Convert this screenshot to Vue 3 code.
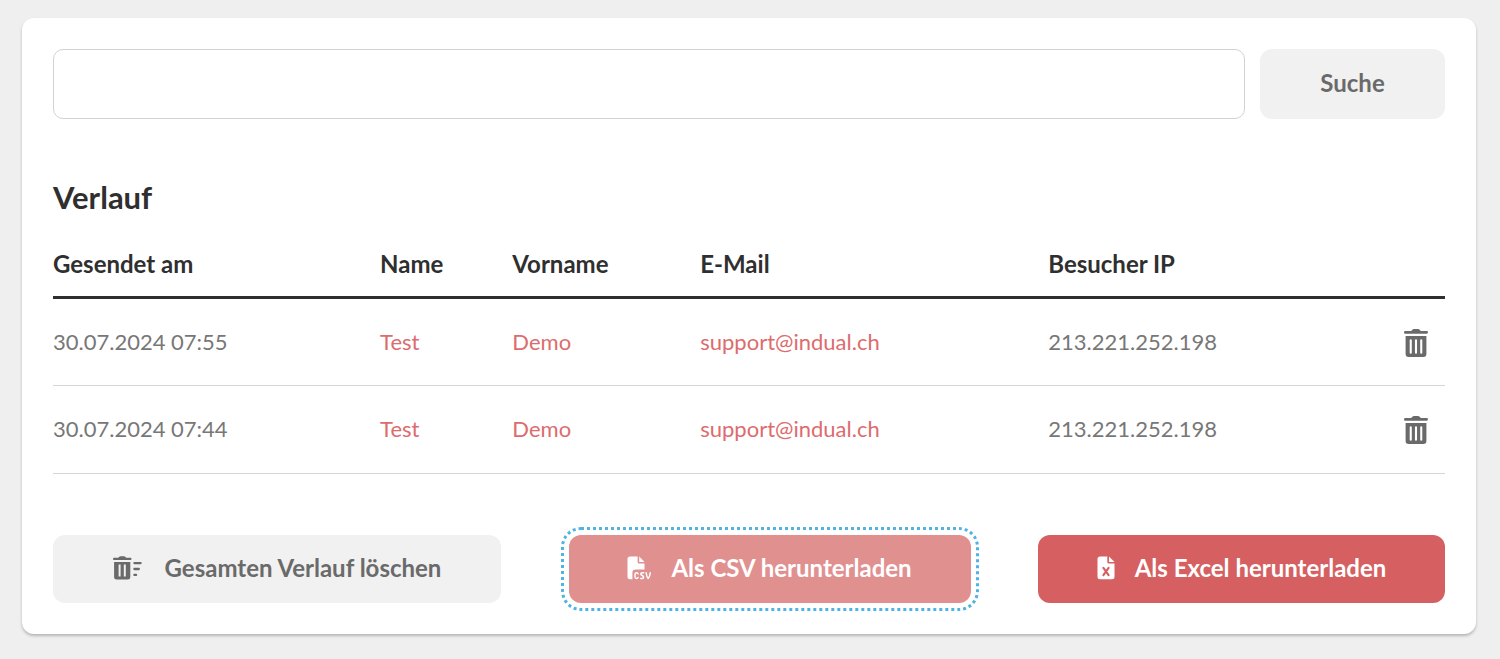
<script setup>
import { ref } from 'vue'

const query = ref('')
const rows = ref([
  { id: 1, sent: '30.07.2024 07:55', name: 'Test', first: 'Demo', mail: 'support@indual.ch', ip: '213.221.252.198' },
  { id: 2, sent: '30.07.2024 07:44', name: 'Test', first: 'Demo', mail: 'support@indual.ch', ip: '213.221.252.198' },
])

function remove(id) {
  rows.value = rows.value.filter((row) => row.id !== id)
}
</script>

<template>
  <main class="card">
    <form class="search" role="search" @submit.prevent>
      <input v-model="query" class="search-field" type="text" aria-label="Suche" />
      <button class="btn btn-grey btn-search" type="submit">Suche</button>
    </form>

    <h2 class="title">Verlauf</h2>

    <table class="history">
      <colgroup>
        <col class="col-sent" />
        <col class="col-name" />
        <col class="col-first" />
        <col class="col-mail" />
        <col />
        <col class="col-action" />
      </colgroup>
      <thead>
        <tr>
          <th scope="col">Gesendet am</th>
          <th scope="col">Name</th>
          <th scope="col">Vorname</th>
          <th scope="col">E-Mail</th>
          <th scope="col">Besucher IP</th>
          <td></td>
        </tr>
      </thead>
      <tbody>
        <tr v-for="row in rows" :key="row.id">
          <td>{{ row.sent }}</td>
          <td><a href="#">{{ row.name }}</a></td>
          <td><a href="#">{{ row.first }}</a></td>
          <td><a href="#">{{ row.mail }}</a></td>
          <td>{{ row.ip }}</td>
          <td class="action">
            <button class="icon-btn" type="button" aria-label="Eintrag löschen" @click="remove(row.id)">
              <svg class="trash" viewBox="0 0 24 28" aria-hidden="true">
                <path fill="currentColor" d="M1.2 2H7.2L8.6 .6Q9.1 0 9.9 0H14.1Q14.9 0 15.4 .6L16.8 2H22.8Q24 2 24 3.3T22.8 4.8H1.2Q0 4.8 0 3.4T1.2 2Z" />
                <path fill="currentColor" fill-rule="evenodd" d="M1.6 7H22.4V25Q22.4 28 19.4 28H4.6Q1.6 28 1.6 25ZM5.7 11.2V23.8Q5.7 24.8 6.75 24.8T7.8 23.8V11.2Q7.8 10.2 6.75 10.2T5.7 11.2ZM10.95 11.2V23.8Q10.95 24.8 12 24.8T13.05 23.8V11.2Q13.05 10.2 12 10.2T10.95 11.2ZM16.2 11.2V23.8Q16.2 24.8 17.25 24.8T18.3 23.8V11.2Q18.3 10.2 17.25 10.2T16.2 11.2Z" />
              </svg>
            </button>
          </td>
        </tr>
      </tbody>
    </table>

    <div class="actions">
      <button class="btn btn-grey btn-clear" type="button">
        <svg class="icon-clear" viewBox="0 0 29 24" aria-hidden="true">
          <path fill="currentColor" d="M.9 1.8H5.2L6.3 .7Q6.8 .2 7.5 .2H11Q11.7 .2 12.2 .7L13.3 1.8H17.6Q18.5 1.8 18.5 2.9T17.6 4H.9Q0 4 0 2.9T.9 1.8Z" />
          <path fill="currentColor" fill-rule="evenodd" d="M1.1 6H17.3V21.2Q17.3 23.6 14.9 23.6H3.5Q1.1 23.6 1.1 21.2ZM5.6 8.6V20.6H7.6V8.6ZM10.8 8.6V20.6H12.8V8.6Z" />
          <path fill="none" stroke="currentColor" stroke-width="2.3" stroke-linecap="round" d="M21.4 7.1H27.6M21.4 13H25.8M21.4 18.9H23.1" />
        </svg>
        <span>Gesamten Verlauf löschen</span>
      </button>
      <button class="btn btn-red btn-csv" type="button">
        <svg class="icon-csv" viewBox="0 0 24 24" aria-hidden="true">
          <path fill="currentColor" d="M3 .5H10.6V6Q10.6 7.5 12.1 7.5H17.5V13.6H8.5Q5.4 13.6 5.4 16.7V23.3H3Q.5 23.3 .5 20.8V3Q.5 .5 3 .5Z" />
          <path fill="currentColor" d="M12.2 .5L17.5 5.9H12.2Z" />
          <path fill="none" stroke="currentColor" stroke-width="1.5" stroke-linecap="round" stroke-linejoin="round" d="M11.1 17.9Q10.9 16.8 9.6 16.8Q8 16.8 8 18.5V20.8Q8 22.5 9.6 22.5Q10.9 22.5 11.1 21.4M16.7 16.8H15.2Q13.8 16.8 13.8 18.1Q13.8 19 15.2 19.5T16.6 21.2Q16.6 22.5 15.2 22.5H13.7M19.2 16.8Q19.3 20.2 21.2 22.5Q23.1 20.2 23.2 16.8" />
        </svg>
        <span>Als CSV herunterladen</span>
      </button>
      <button class="btn btn-red btn-excel" type="button">
        <svg class="icon-excel" viewBox="0 0 18 24" aria-hidden="true">
          <path fill="currentColor" d="M3 .5H10.3V6Q10.3 7.5 11.8 7.5H17.5V20.8Q17.5 23.3 15 23.3H3Q.5 23.3 .5 20.8V3Q.5 .5 3 .5Z" />
          <path fill="currentColor" d="M12 .5L17.5 5.9H12Z" />
          <path class="cut" fill="none" stroke-width="2.1" stroke-linecap="round" d="M6.4 11.9L11.6 19.2M11.6 11.9L6.4 19.2" />
        </svg>
        <span>Als Excel herunterladen</span>
      </button>
    </div>
  </main>
</template>

<style>
body {
  margin: 0;
  background: #efefef;
}
</style>

<style scoped>
.card {
  margin: 18px 24px 25px 22px;
  padding: 31px;
  border-radius: 12px;
  background: #fff;
  box-shadow: 0 2px 3px rgba(0, 0, 0, 0.24);
  color: #6a6a6a;
  font-family: Lato, "Open Sans", sans-serif;
  font-size: 22px;
  line-height: 28px;
}

.search {
  display: flex;
  gap: 15px;
}

.search-field {
  flex: 1;
  min-width: 0;
  height: 70px;
  box-sizing: border-box;
  padding: 0 20px;
  border: 1px solid #d2d2d2;
  border-radius: 10px;
  background: #fff;
  color: inherit;
  font: inherit;
}

.btn {
  display: flex;
  align-items: center;
  justify-content: center;
  height: 68px;
  box-sizing: border-box;
  padding: 0 0 2px;
  border: 0;
  border-radius: 12px;
  font: inherit;
  font-size: 24px;
  font-weight: 700;
  white-space: nowrap;
  cursor: pointer;
}

.btn-grey {
  background: #f1f1f1;
  color: #6a6a6a;
}

.btn-red {
  background: #d66061;
  color: #fff;
}

.btn-search {
  width: 185px;
  height: 70px;
}

.title {
  margin: 60px 0 30px;
  color: #2f2f2f;
  font-size: 31px;
  line-height: 36px;
  font-weight: 700;
}

.history {
  width: 100%;
  border-collapse: collapse;
  table-layout: fixed;
}

.col-sent {
  width: 23.5%;
}

.col-name {
  width: 9.5%;
}

.col-first {
  width: 13.5%;
}

.col-mail {
  width: 25%;
}

.col-action {
  width: 60px;
}

.history th,
.history td {
  padding: 0;
  text-align: left;
  white-space: nowrap;
}

.history thead tr {
  height: 52px;
  border-bottom: 3px solid #2f2f2f;
}

.history th {
  padding-bottom: 13px;
  color: #2f2f2f;
  font-size: 24px;
  font-weight: 700;
}

.history tbody tr {
  height: 88px;
  border-bottom: 1px solid #d5d5d5;
}

.history tbody td {
  color: #777;
}

.history a {
  color: #dc6c6d;
  text-decoration: none;
}

.history .action {
  padding-right: 17px;
  text-align: right;
}

.icon-btn {
  display: inline-flex;
  padding: 0;
  border: 0;
  background: none;
  color: #6a6a6a;
  vertical-align: middle;
  cursor: pointer;
}

.trash {
  width: 24px;
  height: 28px;
}

.actions {
  display: flex;
  justify-content: space-between;
  margin-top: 61px;
}

.btn-clear {
  gap: 23px;
  width: 448px;
}

.btn-csv {
  gap: 20px;
  width: 402px;
  background: #e19090;
  outline: 3px dotted #4fb4e3;
  outline-offset: 5px;
}

.btn-excel {
  gap: 20px;
  width: 407px;
}

.icon-clear {
  width: 29px;
  height: 24px;
}

.icon-csv {
  width: 24px;
  height: 24px;
}

.icon-excel {
  width: 18px;
  height: 24px;
}

.cut {
  stroke: #d66061;
}
</style>
